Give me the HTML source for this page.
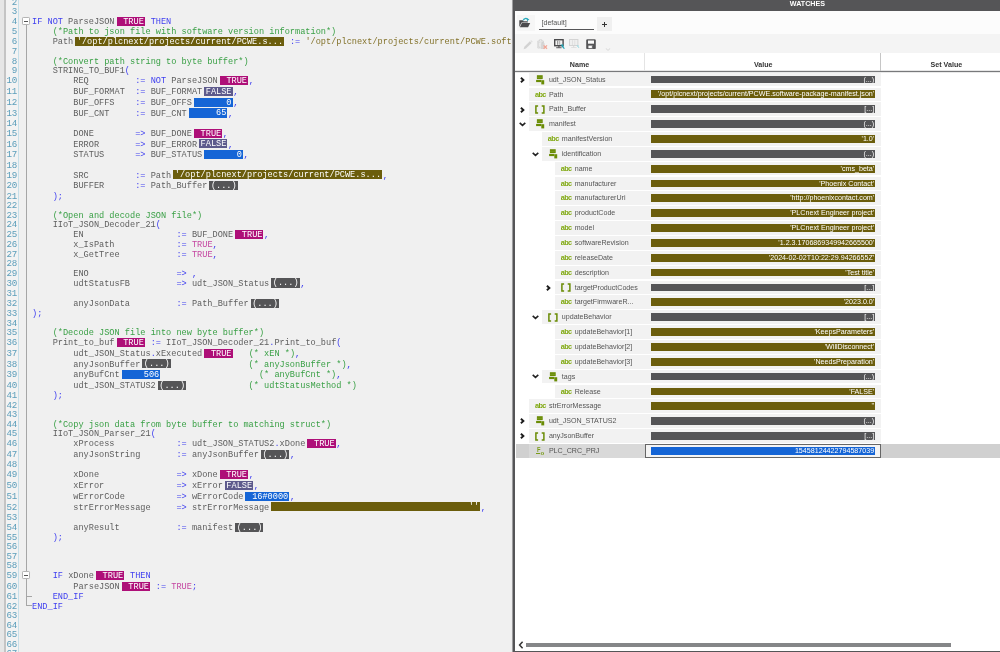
<!DOCTYPE html>
<html><head><meta charset="utf-8"><title>Watches</title>
<style>
html,body{margin:0;padding:0}
body{width:1000px;height:652px;overflow:hidden;background:#ededed;position:relative;font-family:"Liberation Sans",sans-serif}
#lp{position:absolute;left:0;top:0;width:511.2px;height:652px;background:#f0f0f0;overflow:hidden}
#strip{position:absolute;left:0;top:0;width:4.4px;height:652px;background:#e6e6e6}
#sline{position:absolute;left:4.4px;top:0;width:1.2px;height:652px;background:#c4c4c4}
#gut{position:absolute;left:5.6px;top:0;width:12.4px;height:652px;background:#f3f3f3}
#gline{position:absolute;left:17.9px;top:0;width:0;height:652px;border-left:1px solid #c6dfe9}
#nums{will-change:transform;position:absolute;left:0;top:0;width:16.8px;font-family:"Liberation Mono",monospace;font-size:9.2px;letter-spacing:-0.4px;line-height:10.07px;color:#5a9dba}
#nums div{position:absolute;right:0;height:10.07px;white-space:pre}
#code{will-change:transform;position:absolute;left:32.4px;top:0;font-family:"Liberation Mono",monospace;font-size:8.6px;line-height:10.07px;color:#5e5e5e;white-space:pre}
#code .l{position:absolute;left:0;height:10.07px;white-space:pre}
.k{color:#3e3ef0}.p{color:#3e3ef0}.c{color:#3aa046}.t{color:#c445a0}.s{color:#83722a}
.b{display:inline-block;height:9.1px;line-height:10.07px;margin:0 0.65px 0 2px;padding:0 1px 0 1.5px;color:#fff;vertical-align:top;position:relative;top:-0.3px}
.bT{background:#ae0f78}.bF{background:#5d5a8c}.bN{background:#1565d6}.bS{background:#6b5d0c}.bG{background:#555557}
#fold1{position:absolute;left:26px;top:24px;width:1px;height:582px;background:#a6a6a6}
.fb{position:absolute;width:6.1px;height:6.1px;border:1px solid #b4b4b4;border-radius:1.2px;background:#fff;box-sizing:content-box}
.fb i{position:absolute;left:1px;top:2.6px;width:4.2px;height:1px;background:#555}
.ft{position:absolute;height:1px;background:#a6a6a6}
/* right panel */
#rp{position:absolute;left:512.6px;top:0;width:487.4px;height:652px;background:#fff;box-sizing:border-box;border-left:2.6px solid #555557;border-bottom:1.6px solid #555557;overflow:hidden;font-size:7.1px;color:#555}
#rp > *{position:absolute}
#ttl,#tabs,#hdr,#rows{will-change:transform}
#rows{left:0;top:0;width:490px;height:470px}
#ttl{left:0;top:0;width:490px;height:10.7px;background:#555557}
#ttl span{position:absolute;left:274.8px;top:0;line-height:8px;font-size:7.15px;font-weight:bold;color:#fff}
#tabs{left:0;top:10.7px;width:490px;height:23px;background:#fcfcfc}
#tools{left:0;top:33.7px;width:490px;height:19.6px;background:#f4f4f4}
#hdr{left:0;top:53.3px;width:490px;height:17.7px;background:#fff;border-top:0;box-shadow:0 1px 0 #78797b, 0 2px 0 #e9e9e9, inset 0 -1px 0 #e6e6e6;font-weight:bold;color:#333}
#hdr span{position:absolute;top:3px;line-height:18px;text-align:center}
#hdr i{position:absolute;top:0;width:1px;height:18px;background:#e4e4e4}
.r{position:absolute;left:1px;width:490px;height:13.7px}
.r .nm{position:absolute;top:0;height:13.7px;width:200px;background:#f2f2f2;line-height:14.2px;white-space:nowrap;overflow:hidden}
.r .vc{z-index:2;position:absolute;top:0;height:13.7px;left:128.9px;width:236.1px;background:#f2f2f2}
.r .vb{position:absolute;left:6.2px;top:2.95px;width:224.1px;height:7.8px;line-height:8.3px;color:#fff;text-align:right;white-space:nowrap;overflow:hidden;box-sizing:border-box;padding-right:1px;font-size:7.13px}
.vg{background:#555557}.vs{background:#6b5d0c}.vn{background:#1565d6}
.r .exw{position:absolute;top:0;width:13px;height:13.7px}
.ex{position:absolute;left:4.3px;top:4.2px}
.exv{left:3.3px;top:4.6px}
.ic{position:absolute;left:7.6px;top:2px}
.tx{position:absolute;left:20px;top:0}
.abc{display:inline-block;width:14px;margin-left:-14px;font-weight:bold;color:#7fa80f;font-size:7.3px;letter-spacing:-0.55px}
.ar{left:6.6px;top:2.6px}
.fn{left:0;top:0;width:17px;height:13.7px;font-weight:bold;color:#7a9c1a}
.fn u{position:absolute;text-decoration:none;left:8.1px;top:0.6px;font-size:7.2px;line-height:9px;transform:scaleX(0.8);transform-origin:0 0}
.fn i{position:absolute;left:7.3px;top:8.5px;width:4.2px;height:0.9px;background:#7a9c1a}
.fn sub{position:absolute;left:11.6px;top:4.9px;font-size:6.2px;line-height:7px;vertical-align:baseline}
.r.sel{background:#d0d0d0}
.r.sel .nm{background:#d9d9d9;width:116px}
.r.sel .vc{background:#f4f4f4;box-shadow:inset 0 0 0 1px #666}

#tabs > *{position:absolute}
.fbtn{left:1.6px;top:4.2px;width:18px;height:15.6px;background:#f6f6f6}
.fbtn svg{position:absolute;left:2.7px;top:2.2px}
.tab{left:24.2px;top:3.9px;width:54.8px;height:13.9px;border-bottom:1.9px solid #555557;line-height:16.4px;color:#555;font-size:7.1px;box-sizing:content-box}
.tab{text-indent:2.3px}
.plus{left:81.7px;top:6.3px;width:15px;height:13.8px;background:#f0f0f0}
.plus i{position:absolute;background:#333}
.ph{left:5px;top:6.3px;width:5.2px;height:1.2px}
.pv{left:7px;top:4.3px;width:1.2px;height:5.2px}
#tools svg{position:absolute}
#sba{left:3.3px;top:640.9px}
#sb{left:11.2px;top:643.2px;width:424.8px;height:3.6px;background:#858688}
</style></head><body>
<div id="lp">
<div id="strip"></div><div id="sline"></div><div id="gut"></div><div id="gline"></div>
<div id="nums"><div style="top:-11.99px">1</div><div style="top:-2.51px">2</div><div style="top:6.97px">3</div><div style="top:17.05px">4</div><div style="top:27.20px">5</div><div style="top:37.28px">6</div><div style="top:47.43px">7</div><div style="top:56.91px">8</div><div style="top:66.39px">9</div><div style="top:76.47px">10</div><div style="top:87.22px">11</div><div style="top:97.97px">12</div><div style="top:108.72px">13</div><div style="top:118.87px">14</div><div style="top:128.95px">15</div><div style="top:139.70px">16</div><div style="top:150.45px">17</div><div style="top:160.60px">18</div><div style="top:170.68px">19</div><div style="top:181.43px">20</div><div style="top:191.58px">21</div><div style="top:201.06px">22</div><div style="top:210.54px">23</div><div style="top:220.02px">24</div><div style="top:230.10px">25</div><div style="top:240.25px">26</div><div style="top:249.73px">27</div><div style="top:259.21px">28</div><div style="top:268.69px">29</div><div style="top:278.77px">30</div><div style="top:288.92px">31</div><div style="top:299.00px">32</div><div style="top:309.15px">33</div><div style="top:318.63px">34</div><div style="top:328.11px">35</div><div style="top:338.19px">36</div><div style="top:348.94px">37</div><div style="top:359.69px">38</div><div style="top:370.44px">39</div><div style="top:381.19px">40</div><div style="top:391.34px">41</div><div style="top:400.82px">42</div><div style="top:410.30px">43</div><div style="top:419.78px">44</div><div style="top:429.26px">45</div><div style="top:439.34px">46</div><div style="top:450.09px">47</div><div style="top:460.24px">48</div><div style="top:470.32px">49</div><div style="top:481.07px">50</div><div style="top:491.82px">51</div><div style="top:502.57px">52</div><div style="top:512.72px">53</div><div style="top:522.80px">54</div><div style="top:532.95px">55</div><div style="top:542.43px">56</div><div style="top:551.91px">57</div><div style="top:561.39px">58</div><div style="top:571.47px">59</div><div style="top:582.22px">60</div><div style="top:592.37px">61</div><div style="top:601.85px">62</div><div style="top:611.33px">63</div><div style="top:620.81px">64</div><div style="top:630.29px">65</div><div style="top:639.77px">66</div><div style="top:649.25px">67</div><div style="top:658.73px">68</div></div>
<div id="fold1"></div>
<div class="fb" style="left:22.1px;top:17px"><i></i></div>
<div class="fb" style="left:22.1px;top:571.4px"><i></i></div>
<div class="ft" style="left:26.5px;top:595.7px;width:5.4px"></div>
<div class="ft" style="left:26.5px;top:605.1px;width:5.6px"></div>
<div id="code"><div class="l" style="top:17.05px"><span class="k">IF NOT</span> ParseJSON<span class="b bT"> TRUE</span> <span class="k">THEN</span></div><div class="l" style="top:27.20px">    <span class="c">(*Path to json file with software version information*)</span></div><div class="l" style="top:37.28px">    Path<span class="b bS">'/opt/plcnext/projects/current/PCWE.s...</span> <span class="p">:=</span> <span class="s">'/opt/plcnext/projects/current/PCWE.software-package-manifest.json'</span><span class="p">;</span></div><div class="l" style="top:56.91px">    <span class="c">(*Convert path string to byte buffer*)</span></div><div class="l" style="top:66.39px">    STRING_TO_BUF1<span class="p">(</span></div><div class="l" style="top:76.47px">        REQ         <span class="p">:=</span> <span class="k">NOT</span> ParseJSON<span class="b bT"> TRUE</span><span class="p">,</span></div><div class="l" style="top:87.22px">        BUF_FORMAT  <span class="p">:=</span> BUF_FORMAT<span class="b bF">FALSE</span><span class="p">,</span></div><div class="l" style="top:97.97px">        BUF_OFFS    <span class="p">:=</span> BUF_OFFS<span class="b bN">      0</span><span class="p">,</span></div><div class="l" style="top:108.72px">        BUF_CNT     <span class="p">:=</span> BUF_CNT<span class="b bN">     65</span><span class="p">,</span></div><div class="l" style="top:128.95px">        DONE        <span class="p">=&gt;</span> BUF_DONE<span class="b bT"> TRUE</span><span class="p">,</span></div><div class="l" style="top:139.70px">        ERROR       <span class="p">=&gt;</span> BUF_ERROR<span class="b bF">FALSE</span><span class="p">,</span></div><div class="l" style="top:150.45px">        STATUS      <span class="p">=&gt;</span> BUF_STATUS<span class="b bN">      0</span><span class="p">,</span></div><div class="l" style="top:170.68px">        SRC         <span class="p">:=</span> Path<span class="b bS">'/opt/plcnext/projects/current/PCWE.s...</span><span class="p">,</span></div><div class="l" style="top:181.43px">        BUFFER      <span class="p">:=</span> Path_Buffer<span class="b bG">(...)</span></div><div class="l" style="top:191.58px">    <span class="p">);</span></div><div class="l" style="top:210.54px">    <span class="c">(*Open and decode JSON file*)</span></div><div class="l" style="top:220.02px">    IIoT_JSON_Decoder_21<span class="p">(</span></div><div class="l" style="top:230.10px">        EN                  <span class="p">:=</span> BUF_DONE<span class="b bT"> TRUE</span><span class="p">,</span></div><div class="l" style="top:240.25px">        x_IsPath            <span class="p">:=</span> <span class="t">TRUE</span><span class="p">,</span></div><div class="l" style="top:249.73px">        x_GetTree           <span class="p">:=</span> <span class="t">TRUE</span><span class="p">,</span></div><div class="l" style="top:268.69px">        ENO                 <span class="p">=&gt;</span> <span class="p">,</span></div><div class="l" style="top:278.77px">        udtStatusFB         <span class="p">=&gt;</span> udt_JSON_Status<span class="b bG">(...)</span><span class="p">,</span></div><div class="l" style="top:299.00px">        anyJsonData         <span class="p">:=</span> Path_Buffer<span class="b bG">(...)</span></div><div class="l" style="top:309.15px"><span class="p">);</span></div><div class="l" style="top:328.11px">    <span class="c">(*Decode JSON file into new byte buffer*)</span></div><div class="l" style="top:338.19px">    Print_to_buf<span class="b bT"> TRUE</span> <span class="p">:=</span> IIoT_JSON_Decoder_21<span class="p">.</span>Print_to_buf<span class="p">(</span></div><div class="l" style="top:348.94px">        udt_JSON_Status<span class="p">.</span>xExecuted<span class="b bT"> TRUE</span>   <span class="c">(* xEN *)</span><span class="p">,</span></div><div class="l" style="top:359.69px">        anyJsonBuffer<span class="b bG">(...)</span>               <span class="c">(* anyJsonBuffer *)</span><span class="p">,</span></div><div class="l" style="top:370.44px">        anyBufCnt<span class="b bN">    506</span>                   <span class="c">(* anyBufCnt *)</span><span class="p">,</span></div><div class="l" style="top:381.19px">        udt_JSON_STATUS2<span class="b bG">(...)</span>            <span class="c">(* udtStatusMethod *)</span></div><div class="l" style="top:391.34px">    <span class="p">);</span></div><div class="l" style="top:419.78px">    <span class="c">(*Copy json data from byte buffer to matching struct*)</span></div><div class="l" style="top:429.26px">    IIoT_JSON_Parser_21<span class="p">(</span></div><div class="l" style="top:439.34px">        xProcess            <span class="p">:=</span> udt_JSON_STATUS2<span class="p">.</span>xDone<span class="b bT"> TRUE</span><span class="p">,</span></div><div class="l" style="top:450.09px">        anyJsonString       <span class="p">:=</span> anyJsonBuffer<span class="b bG">(...)</span><span class="p">,</span></div><div class="l" style="top:470.32px">        xDone               <span class="p">=&gt;</span> xDone<span class="b bT"> TRUE</span><span class="p">,</span></div><div class="l" style="top:481.07px">        xError              <span class="p">=&gt;</span> xError<span class="b bF">FALSE</span><span class="p">,</span></div><div class="l" style="top:491.82px">        wErrorCode          <span class="p">=&gt;</span> wErrorCode<span class="b bN"> 16#0000</span><span class="p">,</span></div><div class="l" style="top:502.57px">        strErrorMessage     <span class="p">=&gt;</span> strErrorMessage<span class="b bS">                                      ''</span><span class="p">,</span></div><div class="l" style="top:522.80px">        anyResult           <span class="p">:=</span> manifest<span class="b bG">(...)</span></div><div class="l" style="top:532.95px">    <span class="p">);</span></div><div class="l" style="top:571.47px">    <span class="k">IF</span> xDone<span class="b bT"> TRUE</span> <span class="k">THEN</span></div><div class="l" style="top:582.22px">        ParseJSON<span class="b bT"> TRUE</span> <span class="p">:=</span> <span class="t">TRUE</span><span class="p">;</span></div><div class="l" style="top:592.37px">    <span class="k">END_IF</span></div><div class="l" style="top:601.85px"><span class="k">END_IF</span></div></div>
</div>
<div style="position:absolute;left:512px;top:0;width:1px;height:652px;background:#9c9c9e"></div>
<div id="rp">
<div id="ttl"><span>WATCHES</span></div>
<div id="tabs">
<div class="fbtn"><svg width="12" height="11" viewBox="0 0 12 11"><path d="M0.3 3.2 h3.4 l0.9 1 h4.2 v1.3 h-6.3 l-2.2 4.6 z" fill="#4b4b4d"/><path d="M2.9 6.1 h8.3 l-2.1 4.2 h-8.3 z" fill="#4b4b4d"/><path d="M4.3 3.4 C4.8 1.3 7.2 0.9 8.6 2.3" fill="none" stroke="#27a9bb" stroke-width="1.3"/><path d="M7.6 1.2 L10.4 2.3 L8.2 4.3 z" fill="#27a9bb"/></svg></div>
<div class="tab">[default]</div>
<div class="plus"><i class="ph"></i><i class="pv"></i></div>
</div>
<div id="tools">
<svg style="left:8px;top:6px" width="10" height="10" viewBox="0 0 10 10"><path d="M0.6 9.2 L1.3 6.8 L6.9 1.2 L8.6 2.9 L3 8.5 z" fill="#d2d2d2"/><path d="M7.4 0.8 L8.2 0.2 L9.6 1.6 L9 2.4 z" fill="#dcdcdc"/></svg>
<svg style="left:22.5px;top:5.2px" width="11" height="11" viewBox="0 0 11 11"><path d="M0.8 2 h1.6 v-1.2 h2.4 v1.2 h1.6 v2 h-1 v-1 h-3.6 v5 h1 v1 h-2 z" fill="none" stroke="#d0d0d0" stroke-width="0.8"/><rect x="3.6" y="4.2" width="4" height="5.8" fill="#d6d6d6"/><rect x="4.6" y="3.2" width="2" height="1.4" fill="#d0d0d0"/><path d="M6.6 6.4 L10 9.8 M10 6.4 L6.6 9.8" stroke="#f2a595" stroke-width="1.3"/></svg>
<svg style="left:39.3px;top:5.6px" width="11" height="10" viewBox="0 0 11 10"><rect x="0.7" y="0.7" width="8.4" height="6" fill="#f4f4f4" stroke="#4b4b4d" stroke-width="1.4"/><rect x="3" y="1.6" width="1" height="4.2" fill="#9a9a9a"/><rect x="4.6" y="1.6" width="1.6" height="4.2" fill="#b8b8b8"/><rect x="4.2" y="7.2" width="1.4" height="1.3" fill="#4b4b4d"/><rect x="2.2" y="8.3" width="5.4" height="0.9" fill="#4b4b4d"/><path d="M6.4 5.6 h3 v3 z" fill="#1fa2b4"/><path d="M8 7.2 L10.4 9.6" stroke="#1fa2b4" stroke-width="1.2"/></svg>
<svg style="left:54.6px;top:5.6px" width="11" height="10" viewBox="0 0 11 10"><rect x="0.5" y="0.5" width="8.4" height="6" fill="#efefef" stroke="#d4d4d4" stroke-width="1"/><rect x="3" y="1.2" width="0.8" height="4.8" fill="#dcdcdc"/><rect x="5.4" y="1.2" width="0.8" height="4.8" fill="#dcdcdc"/><rect x="4.2" y="7" width="1" height="1.3" fill="#d8d8d8"/><rect x="2.2" y="8.3" width="5.4" height="0.7" fill="#d8d8d8"/><path d="M7.4 6.2 h2.2 v2.2 z" fill="#a8dbe3"/><path d="M8.4 7.2 L10.2 9" stroke="#a8dbe3" stroke-width="1"/></svg>
<svg style="left:71.8px;top:5.4px" width="10" height="10.4" viewBox="0 0 10 10.4"><path d="M0.2 1.4 Q0.2 0.2 1.4 0.2 H8.6 Q9.8 0.2 9.8 1.4 V9 Q9.8 10.2 8.6 10.2 H1.4 Q0.2 10.2 0.2 9 z" fill="#555557"/><rect x="2" y="1.5" width="6" height="3.2" fill="#fafafa"/><rect x="2.4" y="6.6" width="4.4" height="2.6" fill="#fafafa"/><rect x="5.9" y="6.6" width="0.9" height="2.6" fill="#555557"/></svg>
<svg style="left:90px;top:14px" width="6" height="3" viewBox="0 0 6 3"><path d="M0.8 0.4 L3 2.4 L5.2 0.4" fill="none" stroke="#cfcfcf" stroke-width="0.8"/></svg>
</div>
<div id="hdr"><span style="left:0;width:129px">Name</span><i style="left:129px"></i><span style="left:130.7px;width:235px">Value</span><i style="left:365px;background:#c6c6c6"></i><span style="left:367.4px;width:128px">Set Value</span></div>
<div id="rows">
<div class="r" style="top:72.65px"><div class="nm" style="left:12.9px"><svg class="ic st" width="9" height="10" viewBox="0 0 9 10"><rect x="0.9" y="0.2" width="5.8" height="3.9" fill="#6a8c05"/><rect x="0.1" y="4.9" width="5.2" height="2.2" fill="#6a8c05"/><rect x="5.3" y="5.2" width="2.9" height="4.2" fill="#6a8c05"/><rect x="0.9" y="1.9" width="5.8" height="0.5" fill="#8aa83a"/></svg><span class="tx">udt_JSON_Status</span></div><div class="exw" style="left:-0.1px"><svg class="ex" width="5" height="6" viewBox="0 0 5 6"><path d="M0.9 0.7 L3.4 3 L0.9 5.3" fill="none" stroke="#1c1c1c" stroke-width="1.9"/></svg></div><div class="vc"><div class="vb vg">(...)</div></div></div>
<div class="r" style="top:87.50px"><div class="nm" style="left:12.9px"><span class="tx"><b class="abc">abc</b>Path</span></div><div class="vc"><div class="vb vs">'/opt/plcnext/projects/current/PCWE.software-package-manifest.json'</div></div></div>
<div class="r" style="top:102.36px"><div class="nm" style="left:12.9px"><svg class="ic ar" width="10" height="9" viewBox="0 0 10 9"><path d="M3.1 0.9 H0.9 V7.9 H3.1 M6.7 0.9 H8.9 V7.9 H6.7" fill="none" stroke="#6a8c05" stroke-width="1.5"/></svg><span class="tx">Path_Buffer</span></div><div class="exw" style="left:-0.1px"><svg class="ex" width="5" height="6" viewBox="0 0 5 6"><path d="M0.9 0.7 L3.4 3 L0.9 5.3" fill="none" stroke="#1c1c1c" stroke-width="1.9"/></svg></div><div class="vc"><div class="vb vg">[...]</div></div></div>
<div class="r" style="top:117.21px"><div class="nm" style="left:12.9px"><svg class="ic st" width="9" height="10" viewBox="0 0 9 10"><rect x="0.9" y="0.2" width="5.8" height="3.9" fill="#6a8c05"/><rect x="0.1" y="4.9" width="5.2" height="2.2" fill="#6a8c05"/><rect x="5.3" y="5.2" width="2.9" height="4.2" fill="#6a8c05"/><rect x="0.9" y="1.9" width="5.8" height="0.5" fill="#8aa83a"/></svg><span class="tx">manifest</span></div><div class="exw" style="left:-0.1px"><svg class="ex exv" width="7" height="5" viewBox="0 0 7 5"><path d="M0.7 0.9 L3.5 3.4 L6.3 0.9" fill="none" stroke="#222" stroke-width="1.6"/></svg></div><div class="vc"><div class="vb vg">(...)</div></div></div>
<div class="r" style="top:132.07px"><div class="nm" style="left:25.8px"><span class="tx"><b class="abc">abc</b>manifestVersion</span></div><div class="vc"><div class="vb vs">'1.0'</div></div></div>
<div class="r" style="top:146.92px"><div class="nm" style="left:25.8px"><svg class="ic st" width="9" height="10" viewBox="0 0 9 10"><rect x="0.9" y="0.2" width="5.8" height="3.9" fill="#6a8c05"/><rect x="0.1" y="4.9" width="5.2" height="2.2" fill="#6a8c05"/><rect x="5.3" y="5.2" width="2.9" height="4.2" fill="#6a8c05"/><rect x="0.9" y="1.9" width="5.8" height="0.5" fill="#8aa83a"/></svg><span class="tx">identification</span></div><div class="exw" style="left:12.8px"><svg class="ex exv" width="7" height="5" viewBox="0 0 7 5"><path d="M0.7 0.9 L3.5 3.4 L6.3 0.9" fill="none" stroke="#222" stroke-width="1.6"/></svg></div><div class="vc"><div class="vb vg">(...)</div></div></div>
<div class="r" style="top:161.77px"><div class="nm" style="left:38.7px"><span class="tx"><b class="abc">abc</b>name</span></div><div class="vc"><div class="vb vs">'cms_beta'</div></div></div>
<div class="r" style="top:176.63px"><div class="nm" style="left:38.7px"><span class="tx"><b class="abc">abc</b>manufacturer</span></div><div class="vc"><div class="vb vs">'Phoenix Contact'</div></div></div>
<div class="r" style="top:191.48px"><div class="nm" style="left:38.7px"><span class="tx"><b class="abc">abc</b>manufacturerUri</span></div><div class="vc"><div class="vb vs">'http://phoenixcontact.com'</div></div></div>
<div class="r" style="top:206.34px"><div class="nm" style="left:38.7px"><span class="tx"><b class="abc">abc</b>productCode</span></div><div class="vc"><div class="vb vs">'PLCnext Engineer project'</div></div></div>
<div class="r" style="top:221.19px"><div class="nm" style="left:38.7px"><span class="tx"><b class="abc">abc</b>model</span></div><div class="vc"><div class="vb vs">'PLCnext Engineer project'</div></div></div>
<div class="r" style="top:236.04px"><div class="nm" style="left:38.7px"><span class="tx"><b class="abc">abc</b>softwareRevision</span></div><div class="vc"><div class="vb vs">'1.2.3.1706869349942665500'</div></div></div>
<div class="r" style="top:250.90px"><div class="nm" style="left:38.7px"><span class="tx"><b class="abc">abc</b>releaseDate</span></div><div class="vc"><div class="vb vs">'2024-02-02T10:22:29.9426655Z'</div></div></div>
<div class="r" style="top:265.75px"><div class="nm" style="left:38.7px"><span class="tx"><b class="abc">abc</b>description</span></div><div class="vc"><div class="vb vs">'Test title'</div></div></div>
<div class="r" style="top:280.61px"><div class="nm" style="left:38.7px"><svg class="ic ar" width="10" height="9" viewBox="0 0 10 9"><path d="M3.1 0.9 H0.9 V7.9 H3.1 M6.7 0.9 H8.9 V7.9 H6.7" fill="none" stroke="#6a8c05" stroke-width="1.5"/></svg><span class="tx">targetProductCodes</span></div><div class="exw" style="left:25.7px"><svg class="ex" width="5" height="6" viewBox="0 0 5 6"><path d="M0.9 0.7 L3.4 3 L0.9 5.3" fill="none" stroke="#1c1c1c" stroke-width="1.9"/></svg></div><div class="vc"><div class="vb vg">[...]</div></div></div>
<div class="r" style="top:295.46px"><div class="nm" style="left:38.7px"><span class="tx"><b class="abc">abc</b>targetFirmwareR...</span></div><div class="vc"><div class="vb vs">'2023.0.0'</div></div></div>
<div class="r" style="top:310.31px"><div class="nm" style="left:25.8px"><svg class="ic ar" width="10" height="9" viewBox="0 0 10 9"><path d="M3.1 0.9 H0.9 V7.9 H3.1 M6.7 0.9 H8.9 V7.9 H6.7" fill="none" stroke="#6a8c05" stroke-width="1.5"/></svg><span class="tx">updateBehavior</span></div><div class="exw" style="left:12.8px"><svg class="ex exv" width="7" height="5" viewBox="0 0 7 5"><path d="M0.7 0.9 L3.5 3.4 L6.3 0.9" fill="none" stroke="#222" stroke-width="1.6"/></svg></div><div class="vc"><div class="vb vg">[...]</div></div></div>
<div class="r" style="top:325.17px"><div class="nm" style="left:38.7px"><span class="tx"><b class="abc">abc</b>updateBehavior[1]</span></div><div class="vc"><div class="vb vs">'KeepsParameters'</div></div></div>
<div class="r" style="top:340.02px"><div class="nm" style="left:38.7px"><span class="tx"><b class="abc">abc</b>updateBehavior[2]</span></div><div class="vc"><div class="vb vs">'WillDisconnect'</div></div></div>
<div class="r" style="top:354.88px"><div class="nm" style="left:38.7px"><span class="tx"><b class="abc">abc</b>updateBehavior[3]</span></div><div class="vc"><div class="vb vs">'NeedsPreparation'</div></div></div>
<div class="r" style="top:369.73px"><div class="nm" style="left:25.8px"><svg class="ic st" width="9" height="10" viewBox="0 0 9 10"><rect x="0.9" y="0.2" width="5.8" height="3.9" fill="#6a8c05"/><rect x="0.1" y="4.9" width="5.2" height="2.2" fill="#6a8c05"/><rect x="5.3" y="5.2" width="2.9" height="4.2" fill="#6a8c05"/><rect x="0.9" y="1.9" width="5.8" height="0.5" fill="#8aa83a"/></svg><span class="tx">tags</span></div><div class="exw" style="left:12.8px"><svg class="ex exv" width="7" height="5" viewBox="0 0 7 5"><path d="M0.7 0.9 L3.5 3.4 L6.3 0.9" fill="none" stroke="#222" stroke-width="1.6"/></svg></div><div class="vc"><div class="vb vg">(...)</div></div></div>
<div class="r" style="top:384.58px"><div class="nm" style="left:38.7px"><span class="tx"><b class="abc">abc</b>Release</span></div><div class="vc"><div class="vb vs">'FALSE'</div></div></div>
<div class="r" style="top:399.44px"><div class="nm" style="left:12.9px"><span class="tx"><b class="abc">abc</b>strErrorMessage</span></div><div class="vc"><div class="vb vs">''</div></div></div>
<div class="r" style="top:414.29px"><div class="nm" style="left:12.9px"><svg class="ic st" width="9" height="10" viewBox="0 0 9 10"><rect x="0.9" y="0.2" width="5.8" height="3.9" fill="#6a8c05"/><rect x="0.1" y="4.9" width="5.2" height="2.2" fill="#6a8c05"/><rect x="5.3" y="5.2" width="2.9" height="4.2" fill="#6a8c05"/><rect x="0.9" y="1.9" width="5.8" height="0.5" fill="#8aa83a"/></svg><span class="tx">udt_JSON_STATUS2</span></div><div class="exw" style="left:-0.1px"><svg class="ex" width="5" height="6" viewBox="0 0 5 6"><path d="M0.9 0.7 L3.4 3 L0.9 5.3" fill="none" stroke="#1c1c1c" stroke-width="1.9"/></svg></div><div class="vc"><div class="vb vg">(...)</div></div></div>
<div class="r" style="top:429.15px"><div class="nm" style="left:12.9px"><svg class="ic ar" width="10" height="9" viewBox="0 0 10 9"><path d="M3.1 0.9 H0.9 V7.9 H3.1 M6.7 0.9 H8.9 V7.9 H6.7" fill="none" stroke="#6a8c05" stroke-width="1.5"/></svg><span class="tx">anyJsonBuffer</span></div><div class="exw" style="left:-0.1px"><svg class="ex" width="5" height="6" viewBox="0 0 5 6"><path d="M0.9 0.7 L3.4 3 L0.9 5.3" fill="none" stroke="#1c1c1c" stroke-width="1.9"/></svg></div><div class="vc"><div class="vb vg">[...]</div></div></div>
<div class="r sel" style="top:444.00px"><div class="nm" style="left:12.9px"><span class="ic fn"><u>F</u><i></i><sub>o</sub></span><span class="tx">PLC_CRC_PRJ</span></div><div class="vc"><div class="vb vn">15458124422794587039</div></div></div>
</div>
<div id="sb"></div>
<svg id="sba" width="6" height="8" viewBox="0 0 6 8"><path d="M4.6 0.8 L1.6 4 L4.6 7.2" fill="none" stroke="#333" stroke-width="1.5"/></svg>
</div>
</body></html>
